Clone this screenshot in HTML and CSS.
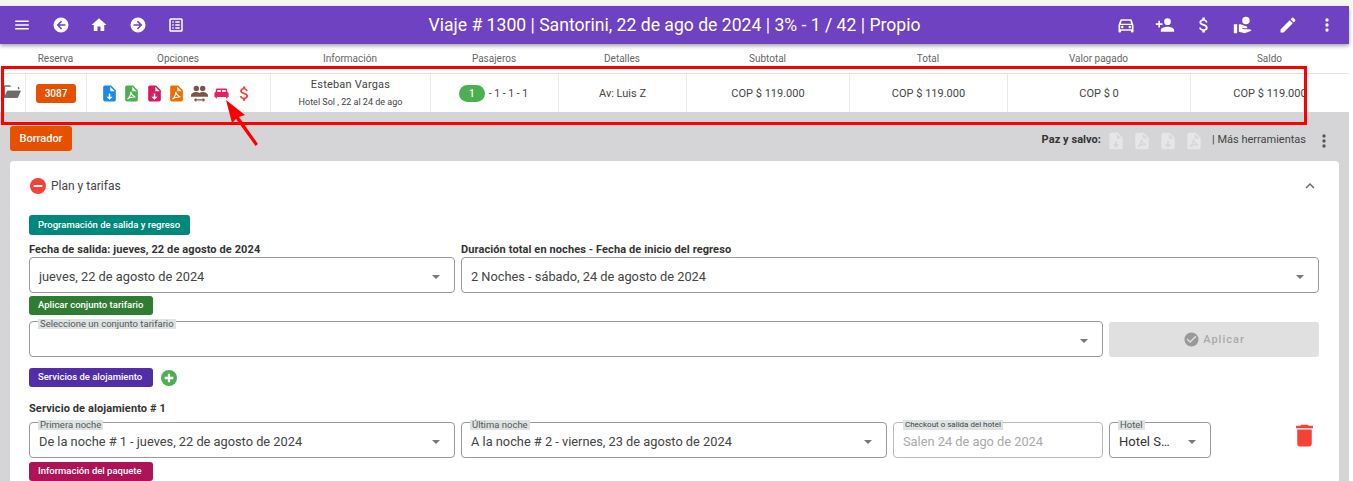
FILE: index.html
```html
<!DOCTYPE html>
<html lang="es">
<head>
<meta charset="utf-8">
<title>Viaje</title>
<link rel="stylesheet" href="styles.css">
</head>
<body>
<div class="page">
  <header class="toolbar">
    <div class="tools tools-left">
      <svg class="ic" viewBox="0 0 24 24"><path d="M3 18h18v-2H3v2zm0-5h18v-2H3v2zm0-7v2h18V6H3z"/></svg>
      <svg class="ic" viewBox="0 0 24 24"><path d="M12 2a10 10 0 1 0 0 20 10 10 0 0 0 0-20zm6 11h-8l3.500 3.500-1.400 1.400L6.200 12l5.900-5.900 1.400 1.400L10 11h8v2z"/></svg>
      <svg class="ic" viewBox="0 0 24 24"><path d="M10 20v-6h4v6h5v-8h3L12 3 2 12h3v8z"/></svg>
      <svg class="ic" viewBox="0 0 24 24"><path d="M12 2a10 10 0 1 0 0 20 10 10 0 0 0 0-20zm-.1 15.900-1.400-1.400L14 13H6v-2h8l-3.500-3.500 1.400-1.400 5.900 5.900-5.900 5.900z"/></svg>
      <svg class="ic" viewBox="0 0 24 24"><path d="M19 3H5a2 2 0 0 0-2 2v14c0 1.100.9 2 2 2h14a2 2 0 0 0 2-2V5a2 2 0 0 0-2-2zm0 16H5V5h14v14zM7 7h2v2H7V7zm4 0h6v2h-6V7zm-4 4h2v2H7v-2zm4 0h6v2h-6v-2zm-4 4h2v2H7v-2zm4 0h6v2h-6v-2z"/></svg>
    </div>
    <h1 class="title">Viaje # 1300 | Santorini, 22 de ago de 2024 | 3% - 1 / 42 | Propio</h1>
    <div class="tools tools-right">
      <svg class="ic" viewBox="0 0 24 24"><path d="M18.900 6c-.2-.6-.8-1-1.400-1h-11c-.7 0-1.200.4-1.400 1L3 12v8c0 .6.400 1 1 1h1c.6 0 1-.4 1-1v-1h12v1c0 .6.400 1 1 1h1c.6 0 1-.4 1-1v-8l-2.100-6zM6.900 7h10.200l1.100 3.500H5.800L6.900 7zM19 17H5v-5h14v5zM7.500 13a1.500 1.500 0 1 0 0 3 1.500 1.500 0 0 0 0-3zm9 0a1.500 1.500 0 1 0 0 3 1.500 1.500 0 0 0 0-3z"/></svg>
      <svg class="ic" viewBox="0 0 24 24"><path d="M15 12a4 4 0 1 0 0-8 4 4 0 0 0 0 8zm-9-2V7H4v3H1v2h3v3h2v-3h3v-2H6zm9 4c-2.700 0-8 1.300-8 4v2h16v-2c0-2.700-5.300-4-8-4z"/></svg>
      <svg class="ic" viewBox="0 0 24 24"><path d="M11.800 10.900c-2.300-.6-3-1.200-3-2.100 0-1.100 1-1.800 2.700-1.800 1.800 0 2.400.8 2.500 2.100h2.200c-.1-1.700-1.100-3.300-3.200-3.800V3h-3v2.200C8.100 5.700 6.500 6.900 6.500 8.800c0 2.300 1.900 3.400 4.600 4.100 2.500.6 3 1.500 3 2.400 0 .7-.5 1.800-2.700 1.800-2.100 0-2.900-.9-3-2.100H6.200c.1 2.200 1.800 3.500 3.800 3.900V21h3v-2.100c2-.4 3.500-1.500 3.500-3.600 0-2.800-2.400-3.800-4.700-4.400z"/></svg>
      <svg class="ic ic-hand" viewBox="0 0 24 24"><path d="M1 11h4v11H1zM15.500 2a4.500 4.500 0 1 1 0 9 4.500 4.500 0 0 1 0-9zM20 17h-7l-2.100-.7.300-.9 1.800.6H16c.7 0 1.200-.5 1.200-1.200 0-.5-.3-1-.8-1.100L9.100 11H7v9l7 2 8-3c0-1.100-.9-2-2-2z"/></svg>
      <svg class="ic" viewBox="0 0 24 24"><path d="M3 17.250V21h3.750L17.800 9.940l-3.750-3.750L3 17.250zM20.700 7.040a1 1 0 0 0 0-1.410l-2.340-2.340a1 1 0 0 0-1.410 0l-1.830 1.830 3.750 3.750 1.830-1.830z"/></svg>
      <svg class="ic" viewBox="0 0 24 24"><path d="M12 8a2 2 0 1 0 0-4 2 2 0 0 0 0 4zm0 2a2 2 0 1 0 0 4 2 2 0 0 0 0-4zm0 6a2 2 0 1 0 0 4 2 2 0 0 0 0-4z"/></svg>
    </div>
  </header>

  <div class="heads">
    <span></span><span>Reserva</span><span>Opciones</span><span>Información</span><span>Pasajeros</span><span>Detalles</span><span>Subtotal</span><span>Total</span><span>Valor pagado</span><span>Saldo</span>
  </div>

  <div class="row">
    <div class="cell cell-folder">
      <svg class="folder" viewBox="0 0 24 24"><path d="M20 6h-8l-2-2H4a2 2 0 0 0-2 2v12c0 1.100.9 2 2 2h15l4-9H7l-3 7V6h16v3h2V8a2 2 0 0 0-2-2z"/><path d="M6.500 11H24l-4 9H2.500z"/></svg>
    </div>
    <div class="cell"><span class="code">3087</span></div>
    <div class="cell cell-opts">
      <svg class="opt blue" viewBox="0 0 24 24"><path d="M14 2H6a2 2 0 0 0-2 2v16c0 1.100.9 2 2 2h12a2 2 0 0 0 2-2V8l-6-6zm-1 7V3.500L18.500 9H13zm0 3v4h3l-4 4-4-4h3v-4h2z"/></svg>
      <svg class="opt green" viewBox="0 0 24 24"><path d="M14 2H6a2 2 0 0 0-2 2v16c0 1.100.9 2 2 2h12a2 2 0 0 0 2-2V8l-6-6zm-1 7V3.500L18.500 9H13z"/><path class="pdf" d="M11 10c.5 3-1.500 6.500-4 9 2-1.500 6-3 10-2.500-2.500-.8-5-3.500-6-6.500z"/></svg>
      <svg class="opt pink" viewBox="0 0 24 24"><path d="M14 2H6a2 2 0 0 0-2 2v16c0 1.100.9 2 2 2h12a2 2 0 0 0 2-2V8l-6-6zm-1 7V3.500L18.500 9H13zm0 3v4h3l-4 4-4-4h3v-4h2z"/></svg>
      <svg class="opt orange" viewBox="0 0 24 24"><path d="M14 2H6a2 2 0 0 0-2 2v16c0 1.100.9 2 2 2h12a2 2 0 0 0 2-2V8l-6-6zm-1 7V3.500L18.500 9H13z"/><path class="pdf" d="M11 10c.5 3-1.500 6.500-4 9 2-1.500 6-3 10-2.500-2.500-.8-5-3.500-6-6.500z"/></svg>
      <svg class="opt opt-small brown" viewBox="0 0 24 24"><circle cx="7.500" cy="5" r="3.800"/><circle cx="16.500" cy="5" r="3.800"/><path d="M0 15c0-3 4-5 7.500-5 1.700 0 3.300.5 4.500 1.200 1.200-.7 2.800-1.200 4.500-1.200 3.500 0 7.500 2 7.500 5v1.500H0z"/><path d="M4 21l3.500-3v2h9v-2l3.500 3-3.500 3v-2h-9v2z"/></svg>
      <svg class="opt opt-small hot" viewBox="0 0 24 24"><path d="M20 10V7a2 2 0 0 0-2-2H6a2 2 0 0 0-2 2v3a2 2 0 0 0-2 2v5h1.330L4 19h1l.67-2h12.670l.66 2h1l.67-2H22v-5a2 2 0 0 0-2-2zm-9 0H6V7h5v3zm7 0h-5V7h5v3z"/></svg>
      <svg class="opt red" viewBox="0 0 24 24"><path d="M11.800 10.900c-2.300-.6-3-1.200-3-2.100 0-1.100 1-1.800 2.700-1.800 1.800 0 2.400.8 2.500 2.100h2.200c-.1-1.700-1.100-3.300-3.200-3.800V3h-3v2.200C8.100 5.700 6.500 6.900 6.500 8.800c0 2.300 1.900 3.400 4.600 4.100 2.500.6 3 1.500 3 2.400 0 .7-.5 1.800-2.700 1.800-2.100 0-2.900-.9-3-2.100H6.200c.1 2.200 1.800 3.500 3.800 3.900V21h3v-2.100c2-.4 3.500-1.500 3.500-3.600 0-2.800-2.400-3.800-4.700-4.400z"/></svg>
    </div>
    <div class="cell cell-info"><span class="name">Esteban Vargas</span><span class="sub">Hotel Sol , 22 al 24 de ago</span></div>
    <div class="cell"><span class="pax">1</span><span class="paxt">- 1 - 1 - 1</span></div>
    <div class="cell">Av: Luis Z</div>
    <div class="cell">COP $ 119.000</div>
    <div class="cell">COP $ 119.000</div>
    <div class="cell">COP $ 0</div>
    <div class="cell">COP $ 119.000</div>
  </div>

  <main class="content">
    <div class="bar">
      <span class="draft">Borrador</span>
      <div class="bar-right">
        <b class="paz">Paz y salvo:</b>
        <svg class="ghost" viewBox="0 0 24 24"><path d="M14 2H6a2 2 0 0 0-2 2v16c0 1.100.9 2 2 2h12a2 2 0 0 0 2-2V8l-6-6zm-1 7V3.500L18.500 9H13zm0 3v4h3l-4 4-4-4h3v-4h2z"/></svg>
        <svg class="ghost" viewBox="0 0 24 24"><path d="M14 2H6a2 2 0 0 0-2 2v16c0 1.100.9 2 2 2h12a2 2 0 0 0 2-2V8l-6-6zm-1 7V3.500L18.500 9H13z"/><path class="pdf-g" d="M11 10c.5 3-1.500 6.500-4 9 2-1.500 6-3 10-2.500-2.500-.8-5-3.500-6-6.500z"/></svg>
        <svg class="ghost" viewBox="0 0 24 24"><path d="M14 2H6a2 2 0 0 0-2 2v16c0 1.100.9 2 2 2h12a2 2 0 0 0 2-2V8l-6-6zm-1 7V3.500L18.500 9H13zm0 3v4h3l-4 4-4-4h3v-4h2z"/></svg>
        <svg class="ghost" viewBox="0 0 24 24"><path d="M14 2H6a2 2 0 0 0-2 2v16c0 1.100.9 2 2 2h12a2 2 0 0 0 2-2V8l-6-6zm-1 7V3.500L18.500 9H13z"/><path class="pdf-g" d="M11 10c.5 3-1.500 6.500-4 9 2-1.500 6-3 10-2.500-2.500-.8-5-3.500-6-6.500z"/></svg>
        <span class="more">| Más herramientas</span>
        <svg class="dots" viewBox="0 0 24 24"><path d="M12 8a2 2 0 1 0 0-4 2 2 0 0 0 0 4zm0 2a2 2 0 1 0 0 4 2 2 0 0 0 0-4zm0 6a2 2 0 1 0 0 4 2 2 0 0 0 0-4z"/></svg>
      </div>
    </div>

    <section class="card">
      <div class="card-head">
        <svg class="minus" viewBox="0 0 24 24"><circle cx="12" cy="12" r="12"/><rect x="5.500" y="10.500" width="13" height="3" fill="#fff"/></svg>
        <span class="card-title">Plan y tarifas</span>
        <svg class="chev" viewBox="0 0 24 24"><path d="M7.400 15.400 12 10.800l4.600 4.600L18 14l-6-6-6 6z"/></svg>
      </div>

      <span class="chip chip-teal">Programación de salida y regreso</span>
      <div class="g2 labels">
        <label class="lab">Fecha de salida: jueves, 22 de agosto de 2024</label>
        <label class="lab">Duración total en noches - Fecha de inicio del regreso</label>
      </div>
      <div class="g2">
        <div class="sel"><span>jueves, 22 de agosto de 2024</span><i class="caret"></i></div>
        <div class="sel"><span>2 Noches - sábado, 24 de agosto de 2024</span><i class="caret"></i></div>
      </div>

      <span class="chip chip-green">Aplicar conjunto tarifario</span>
      <div class="apply-row">
        <div class="sel"><em class="float">Seleccione un conjunto tarifario</em><i class="caret"></i></div>
        <div class="apply">
          <svg class="check" viewBox="0 0 24 24"><path d="M12 2a10 10 0 1 0 0 20 10 10 0 0 0 0-20zm-2 15-5-5 1.400-1.400 3.600 3.600 7.600-7.600L19 8l-9 9z"/></svg>
          <span>Aplicar</span>
        </div>
      </div>

      <div class="service-head">
        <span class="chip chip-purple">Servicios de alojamiento</span>
        <svg class="plus" viewBox="0 0 24 24"><circle cx="12" cy="12" r="12"/><path d="M10.300 5.500h3.400v4.800h4.800v3.400h-4.800v4.800h-3.400v-4.800H5.500v-3.400h4.800z" fill="#fff"/></svg>
      </div>
      <label class="lab lab-serv">Servicio de alojamiento # 1</label>
      <div class="serv-row">
        <div class="sel"><em class="float">Primera noche</em><span>De la noche # 1 - jueves, 22 de agosto de 2024</span><i class="caret"></i></div>
        <div class="sel"><em class="float">Última noche</em><span>A la noche # 2 - viernes, 23 de agosto de 2024</span><i class="caret"></i></div>
        <div class="sel sel-off"><em class="float float-sm">Checkout o salida del hotel</em><span>Salen 24 de ago de 2024</span></div>
        <div class="sel sel-hotel"><em class="float">Hotel</em><span>Hotel S…</span><i class="caret"></i></div>
        <svg class="trash" viewBox="0 0 24 24"><path d="M6 19c0 1.100.9 2 2 2h8a2 2 0 0 0 2-2V7H6v12zM19 4h-3.500l-1-1h-5l-1 1H5v2h14V4z"/></svg>
      </div>
      <span class="chip chip-crimson">Información del paquete</span>
    </section>
  </main>

  <div class="mark"></div>
  <svg class="arrow" viewBox="0 0 32 48"><path d="M0 1 19 16 13 18 32 45 29.500 47 10 20 6 24z"/></svg>
</div>
</body>
</html>
```

FILE: styles.css
```css
* { box-sizing: border-box; }
html, body { margin: 0; height: 100%; overflow: hidden; background: #fff; }
body { font-family: Roboto, "Liberation Sans", sans-serif; color: #333; }
.page { position: relative; height: 481px; display: flex; flex-direction: column; padding-top: 6px; width: 1349px; }
.page::before { content: ""; position: absolute; left: 0; top: 0; width: 1353px; height: 6px; background: #f5f8f0; }

.toolbar { height: 38px; flex: none; background: #6f42c1; color: #fff; display: flex; align-items: center; position: relative; z-index: 2; box-shadow: 0 2px 4px rgba(0,0,0,.35); }
.tools { display: flex; align-items: center; }
.tools-left { width: 300px; padding-left: 13px; gap: 20.500px; }
.tools-right { width: 300px; justify-content: flex-end; gap: 19px; padding-right: 12px; }
.ic { width: 18px; height: 18px; fill: #fff; display: block; flex: none; }
.tools-right .ic { width: 20px; height: 20px; }
.tools-right .ic-hand { margin-right: 6px; }
.title { flex: 1; margin: 0; text-align: center; font-size: 17.600px; font-weight: 400; line-height: 38px; white-space: nowrap; }

.heads, .row { display: grid; grid-template-columns: 25px 61px 184px 160px 128px 128px 163px 158px 183px 159px; }
.heads { flex: none; font-size: 10px; color: #666; text-align: center; line-height: 16px; border-bottom: 1px solid #e4e4e4; height: 30px; padding-top: 7px; }
.row { height: 38px; flex: none; background: #fff; font-size: 11px; color: #444; }
.cell { display: flex; align-items: center; justify-content: center; border-left: 1px solid #e8e8e8; white-space: nowrap; }
.cell-folder { border-left: 0; }
.folder { width: 19px; height: 19px; fill: #6b6b6b; margin-bottom: 3px; margin-right: 2px; }
.code { width: 40px; height: 19px; background: #e65100; color: #fff; border-radius: 3px; font-size: 10px; font-weight: 500; text-align: center; line-height: 19px; }
.cell-opts { gap: 3.500px; padding-right: 4px; }
.opt { width: 19px; height: 19px; display: block; flex: none; }
.opt-small { width: 17px; height: 17px; margin: 0 1px; }
.blue { fill: #1e88e5; } .green { fill: #4caf50; } .pink { fill: #d81b60; } .orange { fill: #ef6c00; }
.brown { fill: #795548; } .hot { fill: #e91e63; } .red { fill: #f44336; }
.pdf { fill: none; stroke: #fff; stroke-width: 1.400; }
.pdf-g { fill: none; stroke: #d5d5d7; stroke-width: 1.400; }
.cell-info { flex-direction: column; gap: 6px; padding-bottom: 1px; }
.name { font-size: 11px; letter-spacing: .2px; line-height: 13px; }
.sub { font-size: 9px; line-height: 11px; }
.pax { width: 26px; height: 17px; background: #4caf50; color: #fff; border-radius: 9px; font-size: 10px; font-weight: 500; text-align: center; line-height: 17px; margin-right: 4px; margin-left: -2px; }
.paxt { font-size: 10.500px; }

.content { flex: 1; background: #d5d5d7; padding: 14px 10px 0; overflow: hidden; }
.bar { display: flex; justify-content: space-between; height: 35px; }
.draft { width: 62px; height: 25px; background: #e65100; color: #fff; border-radius: 3px; font-size: 11px; font-weight: 500; text-align: center; line-height: 25px; }
.bar-right { display: flex; align-items: center; height: 30px; padding-right: 5px; }
.paz { font-size: 11px; font-weight: 700; letter-spacing: .05px; margin-right: 5px; margin-bottom: 4px; }
.ghost { width: 20px; height: 20px; fill: #e6e6e8; margin-right: 6px; flex: none; }
.more { font-size: 11px; margin-left: 2px; margin-right: 8px; color: #444; margin-bottom: 4px; }
.dots { width: 20px; height: 20px; fill: #555; flex: none; }

.card { background: #fff; border-radius: 4px 4px 0 0; padding: 0 19px; height: 340px; display: block; }
.card-head { height: 54px; display: flex; align-items: center; position: relative; padding-bottom: 4px; }
.minus { width: 16px; height: 16px; fill: #f44336; margin-left: 1px; margin-right: 5px; }
.card-title { font-size: 12px; color: #444; }
.chev { position: absolute; right: 1px; top: 16px; width: 18px; height: 18px; fill: #666; }

.chip { display: block; width: 124px; height: 19px; border-radius: 3px; color: #fff; font-size: 9.500px; font-weight: 500; line-height: 18px; padding-left: 9px; white-space: nowrap; }
.chip-teal { width: 161px; height: 20px; background: #00897b; line-height: 19px; }
.chip-green { background: #2e7d32; margin-top: 3px; }
.chip-purple { background: #512da8; }
.chip-crimson { background: #ad1457; margin-top: 4px; }

.g2 { display: grid; grid-template-columns: 426px 858px; gap: 6px; }
.labels { margin-top: 6px; height: 16px; padding-top: 1px; }
.lab { display: block; font-size: 11px; font-weight: 700; color: #333; line-height: 16px; white-space: nowrap; letter-spacing: .1px; }
.sel { position: relative; height: 36px; border: 1px solid #999; border-radius: 4px; background: #fff; display: flex; align-items: center; padding: 2px 30px 0 9px; font-size: 12.800px; color: #444; white-space: nowrap; }
.caret { position: absolute; right: 14px; top: 17px; width: 0; height: 0; border-left: 4px solid transparent; border-right: 4px solid transparent; border-top: 4px solid #777; }
.float { position: absolute; left: 8px; top: -3px; background: #dde3e3; color: #555; font-style: normal; font-size: 9.500px; line-height: 10px; padding: 0 2px; }
.apply-row { display: grid; grid-template-columns: 1074px 210px; gap: 6px; margin-top: 6px; }
.apply { height: 35px; margin-top: 1px; background: #e0e0e0; border-radius: 3px; display: flex; align-items: center; justify-content: center; gap: 3px; color: #aaa; font-size: 11px; font-weight: 500; letter-spacing: 1px; }
.check { width: 17px; height: 17px; fill: #999; }
.service-head { display: flex; align-items: center; gap: 8px; margin-top: 11px; }
.plus { width: 16px; height: 16px; fill: #4caf50; margin-top: 1px; }
.lab-serv { margin-top: 14px; }
.serv-row { display: flex; gap: 6px; margin-top: 5px; position: relative; }
.serv-row .sel { width: 426px; flex: none; }
.serv-row .sel-off { width: 210px; border-color: #bbb; color: #aaa; }
.serv-row .sel-hotel { width: 102px; color: #333; font-size: 13px; }
.float-sm { left: 9px; font-size: 8px; color: #444; }
.trash { position: absolute; left: 1261px; top: -1px; width: 29px; height: 29px; fill: #f44336; }

.mark { position: absolute; left: 1px; top: 66px; width: 1306px; height: 59px; border: 3px solid #f00; z-index: 3; pointer-events: none; }
.arrow { position: absolute; left: 226px; top: 99px; width: 32px; height: 48px; fill: #f00; z-index: 4; }
```
